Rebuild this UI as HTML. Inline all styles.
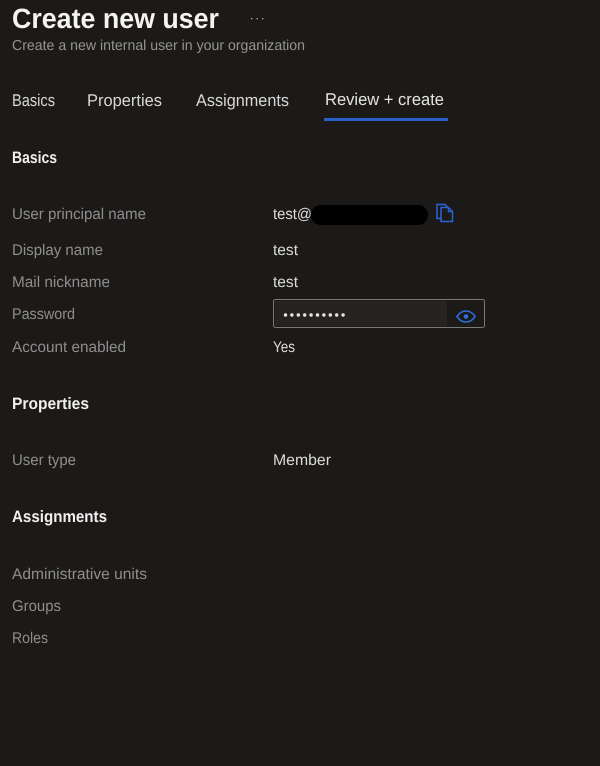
<!DOCTYPE html>
<html lang="en">
<head>
<meta charset="utf-8">
<title>Create new user</title>
<style>
html,body{margin:0;padding:0;background:#1b1a19;width:600px;height:766px;overflow:hidden}
svg{display:block;filter:blur(.3px)}
text{font-family:"Liberation Sans",sans-serif;text-rendering:geometricPrecision}
.l{font-size:15.5px;fill:#8f8e8d}
.v{font-size:15.5px;fill:#dcdbda}
.h{font-size:16.5px;font-weight:700;fill:#f0efee}
.t{font-size:17px;fill:#d8d7d6}
</style>
</head>
<body>
<svg width="600" height="766" viewBox="0 0 600 766" xmlns="http://www.w3.org/2000/svg">
<rect width="600" height="766" fill="#1b1a19"/>
<text x="12" y="28" font-size="28" font-weight="700" fill="#f5f4f3" textLength="207" lengthAdjust="spacingAndGlyphs">Create new user</text>
<g fill="#b5b4b3"><rect x="251" y="18" width="1.300" height="1.300"/><rect x="256.500" y="18" width="1.300" height="1.300"/><rect x="262" y="18" width="1.300" height="1.300"/></g>
<text x="12" y="50" font-size="14.500px" fill="#959493" textLength="293" lengthAdjust="spacingAndGlyphs">Create a new internal user in your organization</text>

<text class="t" x="12" y="106" textLength="43" lengthAdjust="spacingAndGlyphs">Basics</text>
<text class="t" x="87" y="106" textLength="75" lengthAdjust="spacingAndGlyphs">Properties</text>
<text class="t" x="196" y="106" textLength="93" lengthAdjust="spacingAndGlyphs">Assignments</text>
<text class="t" x="325" y="105" textLength="119" lengthAdjust="spacingAndGlyphs" style="fill:#e4e3e2">Review + create</text>
<rect x="324" y="118" width="124" height="3" fill="#2a5fc9"/>

<text class="h" x="12" y="163" textLength="45" lengthAdjust="spacingAndGlyphs">Basics</text>
<text class="l" x="12" y="219" textLength="134" lengthAdjust="spacingAndGlyphs">User principal name</text>
<text class="l" x="12" y="255" textLength="91" lengthAdjust="spacingAndGlyphs">Display name</text>
<text class="l" x="12" y="287" textLength="98" lengthAdjust="spacingAndGlyphs">Mail nickname</text>
<text class="l" x="12" y="319" textLength="63" lengthAdjust="spacingAndGlyphs">Password</text>
<text class="l" x="12" y="352" textLength="114" lengthAdjust="spacingAndGlyphs">Account enabled</text>

<text class="v" x="273" y="219" textLength="39" lengthAdjust="spacingAndGlyphs">test@</text>
<rect x="311" y="205" width="117" height="20" rx="10" fill="#000"/>
<g fill="none" stroke="#2a63d4" stroke-width="1.500">
<path d="M442 218.500H437V204.500H445L447.500 207"/>
<path d="M441 207.500H448.500L452.500 211.500V221.500H441Z"/>
<path d="M448.500 207.500V211.500H452.500"/>
</g>
<text class="v" x="273" y="255" textLength="25" lengthAdjust="spacingAndGlyphs">test</text>
<text class="v" x="273" y="287" textLength="25" lengthAdjust="spacingAndGlyphs">test</text>

<rect x="273.500" y="299.500" width="211" height="28" rx="2" fill="#1b1a19" stroke="#7a7978"/>
<rect x="275" y="301" width="172" height="25" fill="#252423"/>
<g fill="#e8e7e6">
<circle cx="285.500" cy="315" r="1.700"/><circle cx="291.900" cy="315" r="1.700"/><circle cx="298.300" cy="315" r="1.700"/><circle cx="304.700" cy="315" r="1.700"/><circle cx="311.100" cy="315" r="1.700"/><circle cx="317.500" cy="315" r="1.700"/><circle cx="323.900" cy="315" r="1.700"/><circle cx="330.300" cy="315" r="1.700"/><circle cx="336.700" cy="315" r="1.700"/><circle cx="343.100" cy="315" r="1.700"/>
</g>
<path d="M457 316.500C459.500 312.500 463 311 466 311C469 311 472.500 312.500 475 316.500C472.500 320.500 469 322 466 322C463 322 459.500 320.500 457 316.500Z" fill="none" stroke="#2f6fe0" stroke-width="1.600"/>
<circle cx="466" cy="316.500" r="2.300" fill="#2f6fe0"/>
<text class="v" x="273" y="352" textLength="22" lengthAdjust="spacingAndGlyphs">Yes</text>

<text class="h" x="12" y="409" textLength="77" lengthAdjust="spacingAndGlyphs">Properties</text>
<text class="l" x="12" y="465" textLength="64" lengthAdjust="spacingAndGlyphs">User type</text>
<text class="v" x="273" y="465" textLength="58" lengthAdjust="spacingAndGlyphs">Member</text>

<text class="h" x="12" y="522" textLength="95" lengthAdjust="spacingAndGlyphs">Assignments</text>
<text class="l" x="12" y="579" textLength="135" lengthAdjust="spacingAndGlyphs">Administrative units</text>
<text class="l" x="12" y="611" textLength="49" lengthAdjust="spacingAndGlyphs">Groups</text>
<text class="l" x="12" y="643" textLength="36" lengthAdjust="spacingAndGlyphs">Roles</text>
</svg>
</body>
</html>
